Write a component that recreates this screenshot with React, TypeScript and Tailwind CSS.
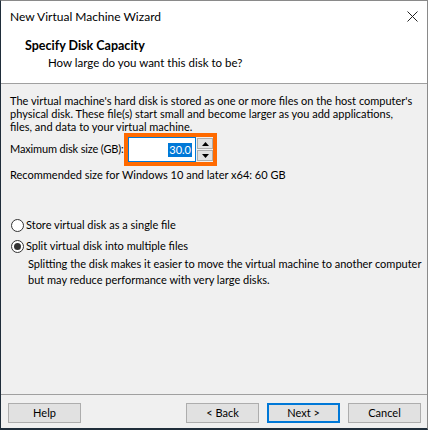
import React from "react";

const font = { fontFamily: 'Lato, "Liberation Sans", sans-serif' };

function Radio({ checked }: { checked?: boolean }) {
  return (
    <span className="flex h-[13px] w-[13px] items-center justify-center rounded-full border border-[#333] bg-white">
      {checked && <span className="h-[7px] w-[7px] rounded-full bg-[#333]" />}
    </span>
  );
}

function Btn({ label, primary }: { label: string; primary?: boolean }) {
  return (
    <button
      className={
        "flex h-[20px] w-[73px] items-center justify-center bg-[#e1e1e1] text-[11px] text-black " +
        (primary ? "border-2 border-[#0078d7]" : "border border-[#adadad]")
      }
    >
      {label}
    </button>
  );
}

export default function App() {
  return (
    <div
      className="flex h-[430px] w-[428px] flex-col overflow-hidden whitespace-nowrap border-t border-r border-b-2 border-l border-t-[#8a8a8a] border-r-[#8a8a8a] border-b-[#1f2d3a] border-l-[#1f2d3a] bg-[#f0f0f0] text-[11px] text-black"
      style={font}
    >
      {/* Header */}
      <div className="flex h-[82px] flex-col bg-white">
        <div className="flex h-[31px] items-center justify-between pl-[9px] pr-[9px]">
          <span className="text-[12px] leading-none">New Virtual Machine Wizard</span>
          <svg width="11" height="11" viewBox="0 0 11 11">
            <path d="M0.5 0.5 L10.5 10.5 M10.5 0.5 L0.5 10.5" stroke="#222" strokeWidth="1" />
          </svg>
        </div>
        <div className="pl-[24px] pt-[7px] text-[12.5px] font-bold leading-[14px]">Specify Disk Capacity</div>
        <div className="pl-[47px] pt-[3px] text-[11.5px] leading-[14px]">How large do you want this disk to be?</div>
      </div>
      <div className="h-px bg-[#a0a0a0]" />

      {/* Body */}
      <div className="flex flex-1 flex-col px-[9px] pt-[10px]">
        <p className="leading-[13px]">
          The virtual machine's hard disk is stored as one or more files on the host computer's
          <br />
          physical disk. These file(s) start small and become larger as you add applications,
          <br />
          files, and data to your virtual machine.
        </p>
        <div className="flex items-center">
          <span className="w-[114px] shrink-0 tracking-[-0.15px]">Maximum disk size (GB):</span>
          <div className="flex h-[33px] w-[93px] items-stretch border-4 border-[#ff6a00] bg-[#f0f0f0]">
            <div className="flex flex-1 items-center justify-end border border-[#0078d7] bg-white pr-[3px]">
              <span className="bg-[#0078d7] px-[1px] leading-[14px] text-white">30.0</span>
            </div>
            <div className="flex w-[17px] flex-col gap-[1px] py-[1px] pl-[1px]">
              <div className="flex flex-1 items-center justify-center border border-[#adadad] bg-[#e1e1e1]">
                <svg width="7" height="4" viewBox="0 0 7 4">
                  <path d="M0 4 L3.5 0 L7 4 Z" fill="#000" />
                </svg>
              </div>
              <div className="flex flex-1 items-center justify-center border border-[#adadad] bg-[#e1e1e1]">
                <svg width="7" height="4" viewBox="0 0 7 4">
                  <path d="M0 0 L3.5 4 L7 0 Z" fill="#000" />
                </svg>
              </div>
            </div>
          </div>
        </div>
        <p className="mt-[2px] leading-[14px]">Recommended size for Windows 10 and later x64: 60 GB</p>

        <div className="mt-[36px] flex items-center gap-[2px] pl-[1px]">
          <Radio />
          <span className="leading-[14px]">Store virtual disk as a single file</span>
        </div>
        <div className="mt-[7px] flex items-center gap-[2px] pl-[1px]">
          <Radio checked />
          <span className="leading-[14px]">Split virtual disk into multiple files</span>
        </div>
        <p className="mt-[3px] pl-[18px] leading-[16px]">
          Splitting the disk makes it easier to move the virtual machine to another computer
          <br />
          but may reduce performance with very large disks.
        </p>
      </div>

      {/* Footer */}
      <div className="h-px bg-[#a0a0a0]" />
      <div className="flex h-[33px] items-start justify-between pl-[7px] pr-[6px] pt-[8px]">
        <Btn label="Help" />
        <div className="flex gap-[8px]">
          <Btn label="< Back" />
          <Btn label="Next >" primary />
          <Btn label="Cancel" />
        </div>
      </div>
    </div>
  );
}
